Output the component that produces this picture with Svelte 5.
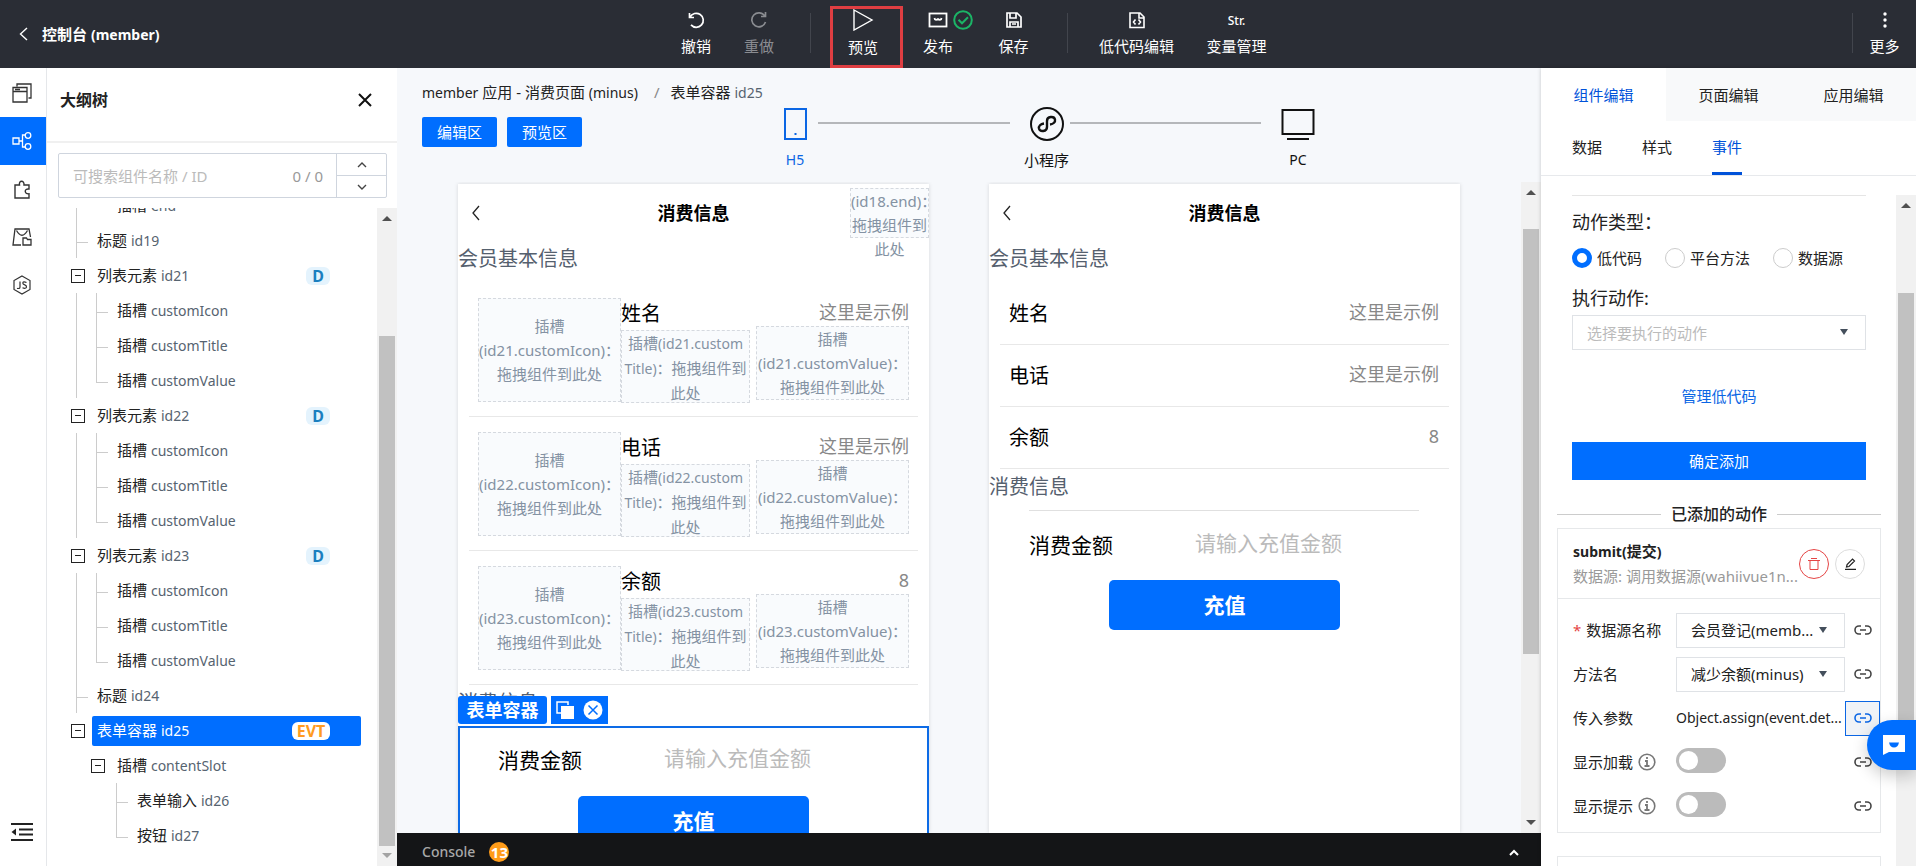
<script>
    let tree = [
        {depth: 2, name: "插槽", id: "end", guides: ["line", "none"]},
        {depth: 1, name: "标题", id: "id19", guides: ["tee"]},
        {depth: 1, name: "列表元素", id: "id21", guides: ["fold"], badge: "D"},
        {depth: 2, name: "插槽", id: "customIcon", guides: ["line", "tee"]},
        {depth: 2, name: "插槽", id: "customTitle", guides: ["line", "tee"]},
        {depth: 2, name: "插槽", id: "customValue", guides: ["line", "end"]},
        {depth: 1, name: "列表元素", id: "id22", guides: ["fold"], badge: "D"},
        {depth: 2, name: "插槽", id: "customIcon", guides: ["line", "tee"]},
        {depth: 2, name: "插槽", id: "customTitle", guides: ["line", "tee"]},
        {depth: 2, name: "插槽", id: "customValue", guides: ["line", "end"]},
        {depth: 1, name: "列表元素", id: "id23", guides: ["fold"], badge: "D"},
        {depth: 2, name: "插槽", id: "customIcon", guides: ["line", "tee"]},
        {depth: 2, name: "插槽", id: "customTitle", guides: ["line", "tee"]},
        {depth: 2, name: "插槽", id: "customValue", guides: ["line", "end"]},
        {depth: 1, name: "标题", id: "id24", guides: ["tee"]},
        {depth: 1, name: "表单容器", id: "id25", guides: ["fold"], badge: "EVT"},
        {depth: 2, name: "插槽", id: "contentSlot", guides: ["none", "fold"]},
        {depth: 3, name: "表单输入", id: "id26", guides: ["none", "none", "tee"]},
        {depth: 3, name: "按钮", id: "id27", guides: ["none", "none", "end"]}
    ];

    let items = [
        {id: "id21", title: "姓名", value: "这里是示例"},
        {id: "id22", title: "电话", value: "这里是示例"},
        {id: "id23", title: "余额", value: "8"}
    ];

    let selected = $state("id25");
    let actionType = $state("低代码");
    let showLoading = $state(false);
    let showTip = $state(false);
</script>

{#snippet scrollbar(top, size, down)}
    <div class="scrollbar">
        <svg width="20" height="20" viewBox="0 0 20 20"><path d="M5 13l5-5 5 5z" fill="#505050"/></svg>
        <div class="track">
            <div style="flex: {top}"></div>
            <div class="thumb" style="flex: {size}"></div>
            <div style="flex: {100 - top - size}"></div>
        </div>
        {#if down}
            <svg width="20" height="20" viewBox="0 0 20 20"><path d="M5 7l5 5 5-5z" fill={down}/></svg>
        {/if}
    </div>
{/snippet}

{#snippet link()}
    <svg width="18" height="10" viewBox="0 0 18 10" fill="none" stroke="currentColor" stroke-width="1.6">
        <path d="M7 1H5a4 4 0 0 0 0 8h2M11 1h2a4 4 0 0 1 0 8h-2M6 5h6"/>
    </svg>
{/snippet}

{#snippet info()}
    <svg width="18" height="18" viewBox="0 0 18 18" fill="none" stroke="#777" stroke-width="1.6">
        <circle cx="9" cy="9" r="7.800"/>
        <path d="M9 4v2M7 8h2v5M6.500 13h5" stroke-width="1.800"/>
    </svg>
{/snippet}

{#snippet navbar()}
    <div class="phone-nav">
        <svg width="10" height="16" viewBox="0 0 10 16" fill="none" stroke="#222" stroke-width="1.3"><path d="M8 1L2 8l6 7"/></svg>
        <span>消费信息</span>
    </div>
{/snippet}

{#snippet form(name)}
    <div class="field">
        <label for={name}>消费金额</label>
        <input id={name} type="text" placeholder="请输入充值金额"/>
    </div>
    <button class="recharge">充值</button>
{/snippet}

<div class="app" lang="zh-CN">
    <header>
        <div class="back">
            <svg width="10" height="14" viewBox="0 0 10 14" fill="none" stroke="#fff" stroke-width="1.4"><path d="M8 1L1.500 7 8 13"/></svg>
            <span>控制台 <span class="latin">(member)</span></span>
        </div>

        <div class="tools">
            <button class="tool">
                <svg width="20" height="20" viewBox="0 0 20 20" fill="none" stroke="currentColor" stroke-width="1.7"><path d="M3.500 3v4.500H8M4 7.200A7 7 0 1 1 5 14.900"/></svg>
                <span>撤销</span>
            </button>
            <button class="tool redo" disabled>
                <svg width="20" height="20" viewBox="0 0 20 20" fill="none" stroke="currentColor" stroke-width="1.7"><path d="M16.500 2v4.500H12M15.700 6A7 7 0 1 0 16.500 12"/></svg>
                <span>重做</span>
            </button>
            <i class="sep"></i>
            <button class="tool preview">
                <svg width="22" height="22" viewBox="0 0 22 22" fill="none" stroke="currentColor" stroke-width="1.4"><path d="M2 1l18 10L2 21z"/></svg>
                <span>预览</span>
            </button>
            <button class="tool publish">
                <svg width="20" height="20" viewBox="0 0 20 20" fill="none" stroke="currentColor" stroke-width="1.8"><rect x="1.500" y="3.500" width="17" height="13"/><path d="M6.500 8q.5 3 3.500 1 3 2 3.500-1"/></svg>
                <svg class="done" width="20" height="20" viewBox="0 0 20 20" fill="none" stroke="#1bb466" stroke-width="2"><circle cx="10" cy="10" r="8.800"/><path d="M5.500 9.800l3.500 3.500 6-6"/></svg>
                <span>发布</span>
            </button>
            <button class="tool save">
                <svg width="18" height="18" viewBox="0 0 18 18" fill="none" stroke="currentColor" stroke-width="1.7"><path d="M2 2h10l4 4v10H2zM5 2v5h6V2M5 16v-5h8v5M7 13h4"/></svg>
                <span>保存</span>
            </button>
            <i class="sep"></i>
            <button class="tool wide">
                <svg width="18" height="18" viewBox="0 0 18 18" fill="none" stroke="currentColor" stroke-width="1.600"><path d="M2 2h10l4 4v10.500H2zM11 2v5h5M7.500 8.500L5.500 11l2 2.500M10.500 8.500l2 2.500-2 2.500"/></svg>
                <span>低代码编辑</span>
            </button>
            <button class="tool wide">
                <b>Str.</b>
                <span>变量管理</span>
            </button>
        </div>

        <div class="more">
            <i class="sep"></i>
            <button class="tool">
                <svg width="18" height="18" viewBox="0 0 18 18" fill="currentColor"><circle cx="9" cy="3" r="1.700"/><circle cx="9" cy="9" r="1.700"/><circle cx="9" cy="15" r="1.700"/></svg>
                <span>更多</span>
            </button>
        </div>
    </header>

    <div class="body">
        <nav class="rail">
            <button aria-label="页面">
                <svg width="20" height="20" viewBox="0 0 20 20" fill="none" stroke="#333" stroke-width="1.300"><path d="M5 3.500V1h14v14h-2.500M1 4.500h14V19H1zM1 8.500h14M3 6.500h5"/></svg>
            </button>
            <button class="active" aria-label="大纲树">
                <svg width="20" height="20" viewBox="0 0 20 20" fill="none" stroke="#fff" stroke-width="1.300"><path d="M1 7h6v6H1zM7 10h3.500M13 4h-2.500v12H13"/><circle cx="16" cy="4.500" r="2.800"/><circle cx="16" cy="15.500" r="2.800"/></svg>
            </button>
            <button aria-label="组件">
                <svg width="20" height="20" viewBox="0 0 20 20" fill="none" stroke="#333" stroke-width="1.400"><path d="M3 6h4.500c-1-5 5-5 4.500 0H17v4c-5-.8-5 5.500 0 4.800V19H3z"/></svg>
            </button>
            <button aria-label="素材">
                <svg width="20" height="20" viewBox="0 0 20 20" fill="none" stroke="#333" stroke-width="1.300"><path d="M9 18H1L3 2h14l1.500 8M4.500 3.500Q10 13 15.500 3.500M11 11h3.500l1 1.500H19V18h-8z"/></svg>
            </button>
            <button aria-label="代码">
                <svg width="20" height="20" viewBox="0 0 20 20" fill="none" stroke="#333" stroke-width="1.200"><path d="M10 1l8 4.500v9L10 19l-8-4.500v-9zM8 6.500v5.500q0 2-3 1.300M14.500 7.500q-3.500-1.500-3.700.6 0 1.200 2 1.800 2 .8 1.700 2.200-.6 2-4 .7"/></svg>
            </button>
            <button class="collapse" aria-label="收起">
                <svg width="22" height="20" viewBox="0 0 22 20" fill="none" stroke="#222" stroke-width="2"><path d="M0 2h22M8 7.500h14M8 12.500h14M0 18h22"/><path d="M5 6.500v7L.5 10z" fill="#222" stroke="none"/></svg>
            </button>
        </nav>

        <aside class="outline">
            <div class="outline-head">
                <h2>大纲树</h2>
                <button aria-label="关闭">
                    <svg width="14" height="14" viewBox="0 0 14 14" stroke="#111" stroke-width="2"><path d="M1 1l12 12M13 1L1 13"/></svg>
                </button>
            </div>
            <div class="search">
                <input type="text" aria-label="搜索组件" placeholder="可搜索组件名称 / ID"/>
                <span>0 / 0</span>
                <div class="step-buttons">
                    <button aria-label="上一个"><svg width="10" height="6" viewBox="0 0 10 6" fill="none" stroke="#444" stroke-width="1.400"><path d="M1 5l4-4 4 4"/></svg></button>
                    <button aria-label="下一个"><svg width="10" height="6" viewBox="0 0 10 6" fill="none" stroke="#444" stroke-width="1.400"><path d="M1 1l4 4 4-4"/></svg></button>
                </div>
            </div>
            <div class="tree-wrap">
                <div class="tree">
                    {#each tree as row}
                        <div class="row">
                            {#each row.guides as guide}
                                <div class="guide {guide}">
                                    {#if guide == "fold"}
                                        <button class="toggle" aria-label="折叠"></button>
                                    {/if}
                                </div>
                            {/each}
                            <button class="node" class:selected={selected == row.id} onclick={() => (selected = row.id)}>
                                <span>{row.name} <span class="latin id">{row.id}</span></span>
                                {#if row.badge}
                                    <b class="badge {row.badge}">{row.badge}</b>
                                {/if}
                            </button>
                        </div>
                    {/each}
                </div>
                {@render scrollbar(17.5, 82.5, "#a3a3a3")}
            </div>
        </aside>

        <main>
            <div class="canvas-head">
                <div class="canvas-left">
                    <div class="crumbs">
                        <span><span class="latin">member</span> 应用 - 消费页面 <span class="latin">(minus)</span></span>
                        <i>/</i>
                        <span>表单容器 <span class="latin id">id25</span></span>
                    </div>
                    <div class="areas">
                        <button>编辑区</button>
                        <button>预览区</button>
                    </div>
                </div>
                <div class="devices">
                    <button class="device on">
                        <svg width="34" height="34" viewBox="0 0 34 34" fill="none" stroke="currentColor" stroke-width="2"><rect x="7" y="2" width="21" height="30"/><path d="M16.500 27h2"/></svg>
                        <span class="latin">H5</span>
                    </button>
                    <i></i>
                    <button class="device">
                        <svg width="34" height="34" viewBox="0 0 34 34" fill="none" stroke="currentColor" stroke-width="2"><circle cx="17" cy="17" r="16"/><path d="M14 16.500c-3.500.5-5.500 2.500-5 5 .8 3.500 8 3.500 8-1.500v-6c0-5 7.200-5 8-1.500.5 2.500-1.500 4.500-5 5" stroke-width="2.400"/></svg>
                        <span>小程序</span>
                    </button>
                    <i></i>
                    <button class="device">
                        <svg width="34" height="34" viewBox="0 0 34 34" fill="none" stroke="currentColor" stroke-width="2"><rect x="1.500" y="3" width="31" height="24"/><path d="M6 32h22"/></svg>
                        <span class="latin">PC</span>
                    </button>
                </div>
            </div>

            <div class="canvas">
                <div class="phones">
                    <section class="phone">
                        {@render navbar()}
                        <div class="slot end-slot">(id18.end)：<br/>拖拽组件到<br/>此处</div>
                        <h3>会员基本信息</h3>
                        <div class="list">
                            {#each items as item}
                                <div class="edit-item">
                                    <div class="slot icon-slot">插槽<br/>({item.id}.customIcon)：<br/>拖拽组件到此处</div>
                                    <div class="title-col">
                                        <span class="item-title">{item.title}</span>
                                        <div class="slot">插槽<span class="latin">({item.id}.custom</span><br/><span class="latin">Title)</span>：拖拽组件到<br/>此处</div>
                                    </div>
                                    <div class="value-col">
                                        <span class="item-value">{item.value}</span>
                                        <div class="slot">插槽<br/>({item.id}.customValue)：<br/>拖拽组件到此处</div>
                                    </div>
                                </div>
                            {/each}
                        </div>
                        <h3>消费信息</h3>
                        <div class="form picked">
                            <div class="picked-bar">
                                <b>表单容器</b>
                                <div>
                                    <button aria-label="复制"><svg width="19" height="19" viewBox="0 0 19 19"><path d="M5 12H1V1h11v3" fill="none" stroke="#fff" stroke-width="1.500"/><rect x="5" y="5" width="13" height="13" fill="#fff"/></svg></button>
                                    <button aria-label="删除"><svg width="20" height="20" viewBox="0 0 20 20"><circle cx="10" cy="10" r="9.500" fill="#fff"/><path d="M5.500 5.500l9 9M14.500 5.500l-9 9" stroke="#006eff" stroke-width="1.500"/></svg></button>
                                </div>
                            </div>
                            {@render form("amount-edit")}
                        </div>
                    </section>

                    <section class="phone">
                        {@render navbar()}
                        <h3>会员基本信息</h3>
                        <div class="list">
                            {#each items as item}
                                <div class="item">
                                    <span class="item-title">{item.title}</span>
                                    <span class="item-value">{item.value}</span>
                                </div>
                            {/each}
                        </div>
                        <h3>消费信息</h3>
                        <div class="form plain">
                            {@render form("amount")}
                        </div>
                    </section>
                </div>
                {@render scrollbar(4.4, 69.6, "#505050")}
            </div>

            <footer>
                <span class="latin">Console</span>
                <b>13</b>
                <button aria-label="展开"><svg width="10" height="7" viewBox="0 0 10 7" fill="none" stroke="#fff" stroke-width="2"><path d="M1 6l4-4 4 4"/></svg></button>
            </footer>
        </main>

        <aside class="props">
            <div class="tabs">
                <button class="on">组件编辑</button>
                <button>页面编辑</button>
                <button>应用编辑</button>
            </div>
            <div class="subtabs">
                <button>数据</button>
                <button>样式</button>
                <button class="on">事件</button>
            </div>
            <div class="props-wrap">
                <div class="props-body">
                    <div class="action">
                        <h4>动作类型：</h4>
                        <div class="radios">
                            {#each ["低代码", "平台方法", "数据源"] as type}
                                <label><input type="radio" name="type" value={type} bind:group={actionType}/>{type}</label>
                            {/each}
                        </div>
                        <h4><label for="run">执行动作:</label></h4>
                        <div class="select empty">
                            <select id="run"><option>选择要执行的动作</option></select>
                        </div>
                        <a href="#manage">管理低代码</a>
                        <button class="confirm">确定添加</button>
                    </div>

                    <div class="added"><span>已添加的动作</span></div>

                    <div class="card">
                        <div class="card-head">
                            <div>
                                <b><span class="latin">submit(</span>提交<span class="latin">)</span></b>
                                <p>数据源: 调用数据源(wahiivue1n...</p>
                            </div>
                            <button class="round del" aria-label="删除"><svg width="12" height="12" viewBox="0 0 12 12" fill="none" stroke="#e54545"><path d="M0 2.500h12M2 2.500v9h8v-9M3 .5h6"/></svg></button>
                            <button class="round" aria-label="编辑"><svg width="12" height="12" viewBox="0 0 12 12" fill="none" stroke="#222" stroke-width="1.200"><path d="M1 11.400h11M2.500 9l.6-2.500L8.500 1l2 2L5 8.500z"/></svg></button>
                        </div>
                        <div class="card-body">
                            <div class="prop">
                                <label for="source"><em>*</em> 数据源名称</label>
                                <div class="select"><select id="source"><option>会员登记(memb...</option></select></div>
                                <button class="link" aria-label="绑定">{@render link()}</button>
                            </div>
                            <div class="prop">
                                <label for="method">方法名</label>
                                <div class="select"><select id="method"><option>减少余额(minus)</option></select></div>
                                <button class="link" aria-label="绑定">{@render link()}</button>
                            </div>
                            <div class="prop">
                                <span class="name">传入参数</span>
                                <span class="latin value">Object.assign(event.det...</span>
                                <button class="link on" aria-label="绑定">{@render link()}</button>
                            </div>
                            <div class="prop">
                                <label for="loading">显示加载 {@render info()}</label>
                                <input id="loading" type="checkbox" bind:checked={showLoading}/>
                                <button class="link" aria-label="绑定">{@render link()}</button>
                            </div>
                            <div class="prop">
                                <label for="tip">显示提示 {@render info()}</label>
                                <input id="tip" type="checkbox" bind:checked={showTip}/>
                                <button class="link" aria-label="绑定">{@render link()}</button>
                            </div>
                        </div>
                    </div>
                    <div class="card next"></div>
                </div>
                {@render scrollbar(12, 69, "")}
            </div>
            <button class="chat" aria-label="客服">
                <svg width="24" height="24" viewBox="0 0 24 24"><path d="M1 2h22v17H7l-6 3z" fill="#fff"/><path d="M7 9.500h10q-1 5-5 5t-5-5z" fill="#006eff"/></svg>
            </button>
        </aside>
    </div>
</div>

<style>
    :global(body) {
        margin: 0;
    }
    .app {
        display: flex;
        flex-direction: column;
        height: 100vh;
        overflow: hidden;
        font-family: "Noto Sans", "Noto Sans CJK SC", sans-serif;
        font-size: 15px;
        line-height: 24px;
        color: #222;
        background: #fff;
    }
    .app * {
        box-sizing: border-box;
    }
    button, input, select {
        font: inherit;
        color: inherit;
        margin: 0;
        padding: 0;
        border: 0;
        background: none;
    }
    button {
        cursor: pointer;
    }
    svg {
        display: block;
        flex: none;
    }
    h2, h3, h4, p {
        margin: 0;
    }
    .latin {
        font-size: 14px;
    }
    .id {
        color: #566370;
    }

    header {
        display: flex;
        flex: none;
        height: 68px;
        background: #2a2d35;
        color: #fff;
    }
    .back {
        flex: 1;
        display: flex;
        align-items: center;
        gap: 13px;
        padding-left: 19px;
        font-weight: bold;
    }
    .tools {
        display: flex;
        padding-left: 16px;
    }
    .tool {
        position: relative;
        display: flex;
        flex-direction: column;
        align-items: center;
        justify-content: space-between;
        width: 63px;
        height: 49px;
        margin-top: 9px;
    }
    .tool > svg:first-child {
        height: 22px;
    }
    .redo {
        color: #8a8c91;
    }
    .tool b {
        font-size: 12px;
        font-weight: 500;
    }
    .sep {
        width: 1px;
        height: 40px;
        margin: 13px 19px 0;
        background: #42454d;
    }
    .preview {
        width: 73px;
        height: 62px;
        margin-top: 6px;
        padding-bottom: 6px;
        padding-right: 6px;
        border: 3px solid #df3e42;
    }
    .publish {
        width: 71px;
    }
    .done {
        position: absolute;
        left: 50px;
        top: 1px;
    }
    .save {
        width: 74px;
        padding-left: 6px;
    }
    .wide {
        width: 100px;
    }
    .more {
        flex: 1;
        display: flex;
        justify-content: flex-end;
    }
    .more .sep {
        margin-right: 0;
    }

    .body {
        flex: 1;
        display: flex;
        min-height: 0;
    }
    .rail {
        flex: none;
        display: flex;
        flex-direction: column;
        width: 47px;
        padding-top: 1px;
        border-right: 1px solid #e5e7ea;
    }
    .rail button {
        display: flex;
        align-items: center;
        padding-left: 12px;
        height: 48px;
    }
    .rail .active {
        background: #006eff;
    }
    .rail .collapse {
        margin: auto 0 10px;
        padding-left: 11px;
    }

    .outline {
        flex: none;
        display: flex;
        flex-direction: column;
        width: 350px;
    }
    .outline-head {
        display: flex;
        align-items: center;
        justify-content: space-between;
        height: 75px;
        padding: 0 25px 10px 13px;
        border-bottom: 2px solid #f0f0f0;
    }
    h2 {
        font-size: 16px;
    }
    .search {
        display: flex;
        align-items: center;
        height: 45px;
        margin: 10px 10px 10px 11px;
        border: 1px solid #cfd5de;
        border-radius: 2px;
        color: #999;
    }
    .search input {
        flex: 1;
        min-width: 0;
        padding-left: 14px;
        outline: 0;
    }
    .search span {
        padding-right: 13px;
    }
    ::placeholder {
        color: #bbb;
        opacity: 1;
    }
    .step-buttons {
        display: flex;
        flex-direction: column;
        align-self: stretch;
        width: 50px;
        border-left: 1px solid #cfd5de;
    }
    .step-buttons button {
        flex: 1;
        display: grid;
        place-items: center;
    }
    .step-buttons button + button {
        border-top: 1px solid #cfd5de;
    }
    .tree-wrap {
        flex: 1;
        display: flex;
        min-height: 0;
    }
    .tree {
        flex: 1;
        overflow: hidden;
        padding: 0 16px 13px 29px;
        display: flex;
        flex-direction: column;
        justify-content: flex-end;
    }
    .row {
        flex: none;
        display: flex;
        align-items: center;
        height: 35px;
    }
    .guide {
        position: relative;
        width: 20px;
        height: 35px;
    }
    .guide:nth-last-child(2) {
        width: 16px;
    }
    .line, .tee {
        border-left: 1px solid #ccc;
    }
    .tee::after, .end::after {
        content: "";
        position: absolute;
        left: 0;
        top: 0;
        width: 11px;
        height: 19px;
        border-bottom: 1px solid #ccc;
    }
    .end::after {
        border-left: 1px solid #ccc;
    }
    .fold {
        display: flex;
        align-items: center;
    }
    .toggle {
        width: 14px;
        height: 14px;
        margin-left: -5px;
        border: 1px solid #222;
        background: linear-gradient(#222, #222) center / 6px 1px no-repeat;
    }
    .node {
        flex: 1;
        display: flex;
        align-items: center;
        justify-content: space-between;
        height: 30px;
        padding: 0 31px 0 5px;
        border-radius: 2px;
        text-align: left;
    }
    .selected, .selected .id {
        background: #006eff;
        color: #fff;
    }
    .badge {
        width: 24px;
        height: 18px;
        border-radius: 6px;
        font-size: 16px;
        line-height: 18px;
        text-align: center;
        color: #1a7fbf;
        background: #e4f3fd;
    }
    .EVT {
        width: 38px;
        color: #ff9b21;
        background: #fff;
    }

    .scrollbar {
        flex: none;
        display: flex;
        flex-direction: column;
        width: 20px;
        background: #f1f1f1;
    }
    .track {
        flex: 1;
        display: flex;
        flex-direction: column;
    }
    .thumb {
        margin: 0 2px;
        background: #c1c1c1;
    }

    main {
        flex: 1;
        display: flex;
        flex-direction: column;
        min-width: 0;
        background: #f6f8fb;
    }
    .canvas-head {
        display: flex;
        flex: none;
        height: 114px;
        padding: 12px 20px 0 25px;
    }
    .canvas-left {
        flex: none;
        width: 350px;
    }
    .crumbs {
        display: flex;
        white-space: nowrap;
    }
    .crumbs i {
        margin: 0 11px 0 16px;
        font-style: normal;
        color: #888;
    }
    .areas {
        display: flex;
        gap: 10px;
        margin-top: 12px;
    }
    .areas button {
        width: 75px;
        height: 30px;
        border-radius: 2px;
        background: #006eff;
        color: #fff;
    }
    .devices {
        flex: 0 1 549px;
        display: flex;
        padding-top: 27px;
    }
    .devices i {
        flex: 1;
        height: 2px;
        margin: 15px 14px 0 0;
        background: #b5b7ba;
    }
    .device {
        flex: none;
        display: flex;
        flex-direction: column;
        align-items: center;
        gap: 7px;
        width: 46px;
        height: 65px;
        white-space: nowrap;
        color: #111;
    }
    .device.on {
        color: #0b66e4;
    }
    .canvas {
        flex: 1;
        display: flex;
        min-height: 0;
    }
    .phones {
        flex: 1;
        display: flex;
        gap: 60px;
        padding: 2px 61px 0 61px;
        overflow: hidden;
    }
    .phone {
        position: relative;
        flex: 1;
        min-width: 0;
        background: #fff;
        box-shadow: 0 0 4px #0002;
    }
    .phone-nav {
        display: flex;
        align-items: center;
        height: 57px;
        padding: 0 23px 0 13px;
        font-size: 18px;
        font-weight: bold;
        color: #000;
    }
    .phone-nav span {
        flex: 1;
        text-align: center;
    }
    h3 {
        font-size: 20px;
        line-height: 36px;
        font-weight: normal;
        color: #55606e;
    }
    .list {
        margin: 6px 11px 0;
    }
    .slot {
        border: 1px dashed #d5d9df;
        background: #f9fbfd;
        text-align: center;
        white-space: nowrap;
        color: #8492a3;
    }
    .end-slot {
        position: absolute;
        right: 0;
        top: 4px;
        width: 79px;
        height: 50px;
    }
    .edit-item {
        display: flex;
        height: 134px;
        padding: 15px 9px 14px;
        border-bottom: 1px solid #e8e8e8;
    }
    .icon-slot {
        flex: 0 1 143px;
        padding-top: 15px;
    }
    .title-col {
        flex: 1;
        margin-right: 6px;
        display: flex;
        flex-direction: column;
    }
    .title-col .slot {
        height: 73px;
    }
    .value-col {
        flex: 0 1 153px;
        display: flex;
        flex-direction: column;
    }
    .item-title {
        font-size: 20px;
        line-height: 32px;
        color: #000;
    }
    .item-value {
        font-size: 18px;
        line-height: 28px;
        text-align: right;
        color: #888;
    }
    .item {
        display: flex;
        justify-content: space-between;
        height: 62px;
        padding: 15px 10px 0 9px;
        border-bottom: 1px solid #e8e8e8;
    }
    .form {
        position: relative;
        height: 150px;
        margin-top: 5px;
    }
    .field {
        display: flex;
        align-items: center;
        height: 70px;
        padding-bottom: 2px;
        margin: 0 41px 0 40px;
        font-size: 21px;
        color: #000;
    }
    .field label {
        width: 166px;
    }
    .field input {
        flex: 1;
        min-width: 0;
        height: 30px;
        margin-bottom: 4px;
        outline: 0;
    }
    .plain .field {
        border-top: 1px solid #e0e0e0;
    }
    .recharge {
        display: block;
        width: 49%;
        height: 50px;
        margin: 0 auto;
        border-radius: 5px;
        background: #006eff;
        color: #fff;
        font-size: 21px;
        font-weight: bold;
    }
    .picked {
        outline: 2px solid #0d6be6;
        outline-offset: -2px;
    }
    .picked-bar {
        position: absolute;
        left: 0;
        top: -30px;
        display: flex;
        gap: 4px;
        height: 28px;
        color: #fff;
        font-size: 18px;
        line-height: 28px;
    }
    .picked-bar b {
        width: 89px;
        border-radius: 3px;
        text-align: center;
        background: #006eff;
    }
    .picked-bar div {
        display: flex;
        align-items: center;
        gap: 8px;
        padding: 0 5px;
        background: #006eff;
    }
    footer {
        position: relative;
        flex: none;
        display: flex;
        align-items: center;
        height: 33px;
        padding: 5px 22px 0 25px;
        background: #141517;
        color: #a8a8a8;
        font-weight: 500;
    }
    footer b {
        width: 20px;
        height: 20px;
        margin-left: 14px;
        border-radius: 50%;
        background: #ff9c19;
        color: #fff;
        line-height: 20px;
        text-align: center;
    }
    footer button {
        margin-left: auto;
    }

    .props {
        position: relative;
        flex: none;
        display: flex;
        flex-direction: column;
        width: 375px;
        box-shadow: 0 0 4px #0003;
        background: #fff;
    }
    .tabs {
        display: flex;
        background: #f8f9fa;
    }
    .tabs button {
        flex: 1;
        height: 53px;
    }
    .tabs .on {
        background: #fff;
        color: #0052d9;
    }
    .subtabs {
        display: flex;
        gap: 40px;
        padding-left: 31px;
        border-bottom: 1px solid #e7e9ec;
    }
    .subtabs button {
        height: 54px;
        border-bottom: 3px solid transparent;
    }
    .subtabs .on {
        color: #0052d9;
        border-color: #0052d9;
    }
    .props-wrap {
        flex: 1;
        display: flex;
        min-height: 0;
        margin-top: 19px;
    }
    .props-body {
        flex: 1;
        min-width: 0;
        overflow: hidden;
        padding: 0 15px 0 16px;
    }
    .action {
        display: flex;
        flex-direction: column;
        margin: 0 15px;
        border-top: 1px solid #e5e5e5;
    }
    h4 {
        font-size: 18px;
        line-height: 28px;
        font-weight: normal;
    }
    .action h4:first-child {
        margin-top: 12px;
    }
    .radios {
        display: flex;
        gap: 23px;
        margin: 10px 0 14px;
    }
    .radios label {
        display: flex;
        align-items: center;
        gap: 5px;
    }
    input[type="radio"] {
        appearance: none;
        width: 20px;
        height: 20px;
        border: 1px solid #ccc;
        border-radius: 50%;
    }
    input[type="radio"]:checked {
        border: 5px solid #006eff;
    }
    .select {
        position: relative;
        flex: none;
        width: 169px;
        height: 35px;
        border: 1px solid #dfe2e6;
    }
    .select::after {
        content: "";
        position: absolute;
        right: 17px;
        top: 13px;
        border: 4px solid transparent;
        border-top: 6px solid #444f5c;
        border-bottom: 0;
        pointer-events: none;
    }
    .select select {
        appearance: none;
        width: 100%;
        height: 100%;
        padding-left: 14px;
    }
    .empty {
        width: auto;
        margin-top: 3px;
        color: #bbb;
    }
    .action a {
        margin: 34px auto;
        color: #0b66e4;
        text-decoration: none;
    }
    .confirm {
        height: 38px;
        background: #006eff;
        color: #fff;
    }
    .added {
        display: flex;
        align-items: center;
        gap: 10px;
        height: 48px;
        padding-top: 20px;
        font-size: 16px;
        font-weight: 500;
    }
    .added::before, .added::after {
        content: "";
        flex: 1;
        height: 1px;
        background: #ccc;
    }
    .card {
        border: 1px solid #e6e8ea;
    }
    .card-head {
        display: flex;
        align-items: center;
        gap: 4px;
        height: 70px;
        padding: 0 15px;
        border-bottom: 1px solid #e6e8ea;
    }
    .card-head div {
        flex: 1;
        min-width: 0;
        white-space: nowrap;
    }
    .card-head p {
        color: #999;
    }
    .round {
        flex: none;
        display: grid;
        place-items: center;
        width: 30px;
        height: 30px;
        border: 1px solid #ddd;
        border-radius: 50%;
    }
    .round + .round {
        margin-left: 2px;
    }
    .del {
        border-color: #e54545;
    }
    .card-body {
        padding: 9px 0 4px 15px;
    }
    .prop {
        display: flex;
        align-items: center;
        height: 44px;
    }
    .prop label, .name {
        display: flex;
        align-items: center;
        gap: 5px;
        flex: none;
        width: 103px;
        white-space: nowrap;
    }
    em {
        font-style: normal;
        color: #e54545;
    }
    .value {
        white-space: nowrap;
    }
    .link {
        flex: none;
        display: grid;
        place-items: center;
        width: 35px;
        height: 35px;
        margin-left: auto;
        border: 1px solid transparent;
        color: #444;
    }
    .link.on {
        border-color: #0b66e4;
        background: #f0f3f7;
        color: #0b66e4;
    }
    input[type="checkbox"] {
        appearance: none;
        width: 50px;
        height: 25px;
        margin-bottom: 4px;
        padding: 3px;
        border-radius: 13px;
        background: #bbb;
    }
    input[type="checkbox"]::before {
        content: "";
        display: block;
        width: 19px;
        height: 19px;
        border-radius: 50%;
        background: #fff;
    }
    input[type="checkbox"]:checked {
        background: #006eff;
    }
    input[type="checkbox"]:checked::before {
        margin-left: auto;
    }
    .next {
        height: 40px;
        margin-top: 23px;
    }
    .chat {
        position: absolute;
        right: 0;
        bottom: 96px;
        width: 49px;
        height: 50px;
        padding-left: 15px;
        border-radius: 25px 0 0 25px;
        background: #006eff;
        box-shadow: 0 6px 16px #0003;
    }
</style>
